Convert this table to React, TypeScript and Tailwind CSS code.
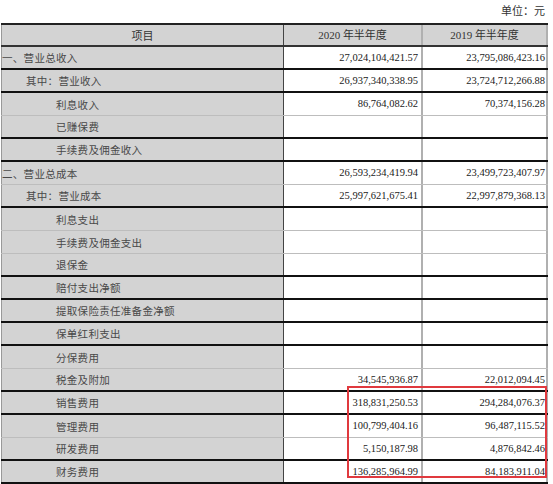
import React from 'react';

type Row = {
  label: string;
  indent: 0 | 1 | 2;
  a?: string;
  b?: string;
  line: 'dark' | 'light';
};

const rows: Row[] = [
  { label: '一、营业总收入', indent: 0, a: '27,024,104,421.57', b: '23,795,086,423.16', line: 'dark' },
  { label: '其中：营业收入', indent: 1, a: '26,937,340,338.95', b: '23,724,712,266.88', line: 'dark' },
  { label: '利息收入', indent: 2, a: '86,764,082.62', b: '70,374,156.28', line: 'light' },
  { label: '已赚保费', indent: 2, line: 'dark' },
  { label: '手续费及佣金收入', indent: 2, line: 'dark' },
  { label: '二、营业总成本', indent: 0, a: '26,593,234,419.94', b: '23,499,723,407.97', line: 'light' },
  { label: '其中：营业成本', indent: 1, a: '25,997,621,675.41', b: '22,997,879,368.13', line: 'dark' },
  { label: '利息支出', indent: 2, line: 'light' },
  { label: '手续费及佣金支出', indent: 2, line: 'light' },
  { label: '退保金', indent: 2, line: 'dark' },
  { label: '赔付支出净额', indent: 2, line: 'dark' },
  { label: '提取保险责任准备金净额', indent: 2, line: 'dark' },
  { label: '保单红利支出', indent: 2, line: 'dark' },
  { label: '分保费用', indent: 2, line: 'light' },
  { label: '税金及附加', indent: 2, a: '34,545,936.87', b: '22,012,094.45', line: 'dark' },
  { label: '销售费用', indent: 2, a: '318,831,250.53', b: '294,284,076.37', line: 'dark' },
  { label: '管理费用', indent: 2, a: '100,799,404.16', b: '96,487,115.52', line: 'light' },
  { label: '研发费用', indent: 2, a: '5,150,187.98', b: '4,876,842.46', line: 'dark' },
  { label: '财务费用', indent: 2, a: '136,285,964.99', b: '84,183,911.04', line: 'dark' },
];

const indentClass = ['pl-0', 'pl-[24px]', 'pl-[54px]'];

const cjk = "font-['Noto_Sans_CJK_SC','Noto_Sans',sans-serif]";
const serif = "font-['Liberation_Serif','Noto_Sans_CJK_SC',serif]";

export default function App() {
  return (
    <div className="relative w-[553px] h-[484px] bg-white overflow-hidden">
      {/* unit label */}
      <div className={'h-[23px] flex items-center justify-end pr-[8px] text-[11px] text-[#333] ' + serif}>
        单位：元
      </div>

      <div className="ml-[1px] w-[547px] border-t-2 border-[#222]">
        {/* header */}
        <div className="grid grid-cols-[282px_138px_127px] h-[22px] border-b-2 border-[#333] bg-[#d3d3d3] text-[11px] text-[#333]">
          <div className={'border-l border-[#999] flex items-center justify-center ' + cjk}>项目</div>
          <div className={'border-l border-[#444] flex items-center justify-center ' + serif}>2020 年半年度</div>
          <div className={'border-l-2 border-r-2 border-[#b0b0b0] flex items-center justify-center ' + serif}>2019 年半年度</div>
        </div>

        {rows.map((r, i) => (
          <div
            key={i}
            className={
              'grid grid-cols-[282px_138px_127px] h-[23px] ' +
              (r.line === 'dark' ? 'border-b-2 border-[#111]' : 'border-b border-[#bdbdbd]')
            }
          >
            <div
              className={
                'bg-[#d3d3d3] border-l border-[#999] flex items-center pt-[1px] text-[10.5px] tracking-[0.3px] text-[#484848] ' +
                cjk + ' ' + indentClass[r.indent]
              }
            >
              {r.label}
            </div>
            <div className={'border-l border-[#444] flex items-center justify-end pr-[3px] text-[10.5px] text-[#1a1a1a] ' + serif}>
              {r.a}
            </div>
            <div className={'border-l-2 border-r-2 border-[#b0b0b0] flex items-center justify-end pr-[1px] text-[10.5px] text-[#1a1a1a] ' + serif}>
              {r.b}
            </div>
          </div>
        ))}
      </div>

      {/* highlight box */}
      <div className="absolute left-[347px] top-[386px] w-[200px] h-[92px] border-2 border-[#e0393e]" />
    </div>
  );
}
